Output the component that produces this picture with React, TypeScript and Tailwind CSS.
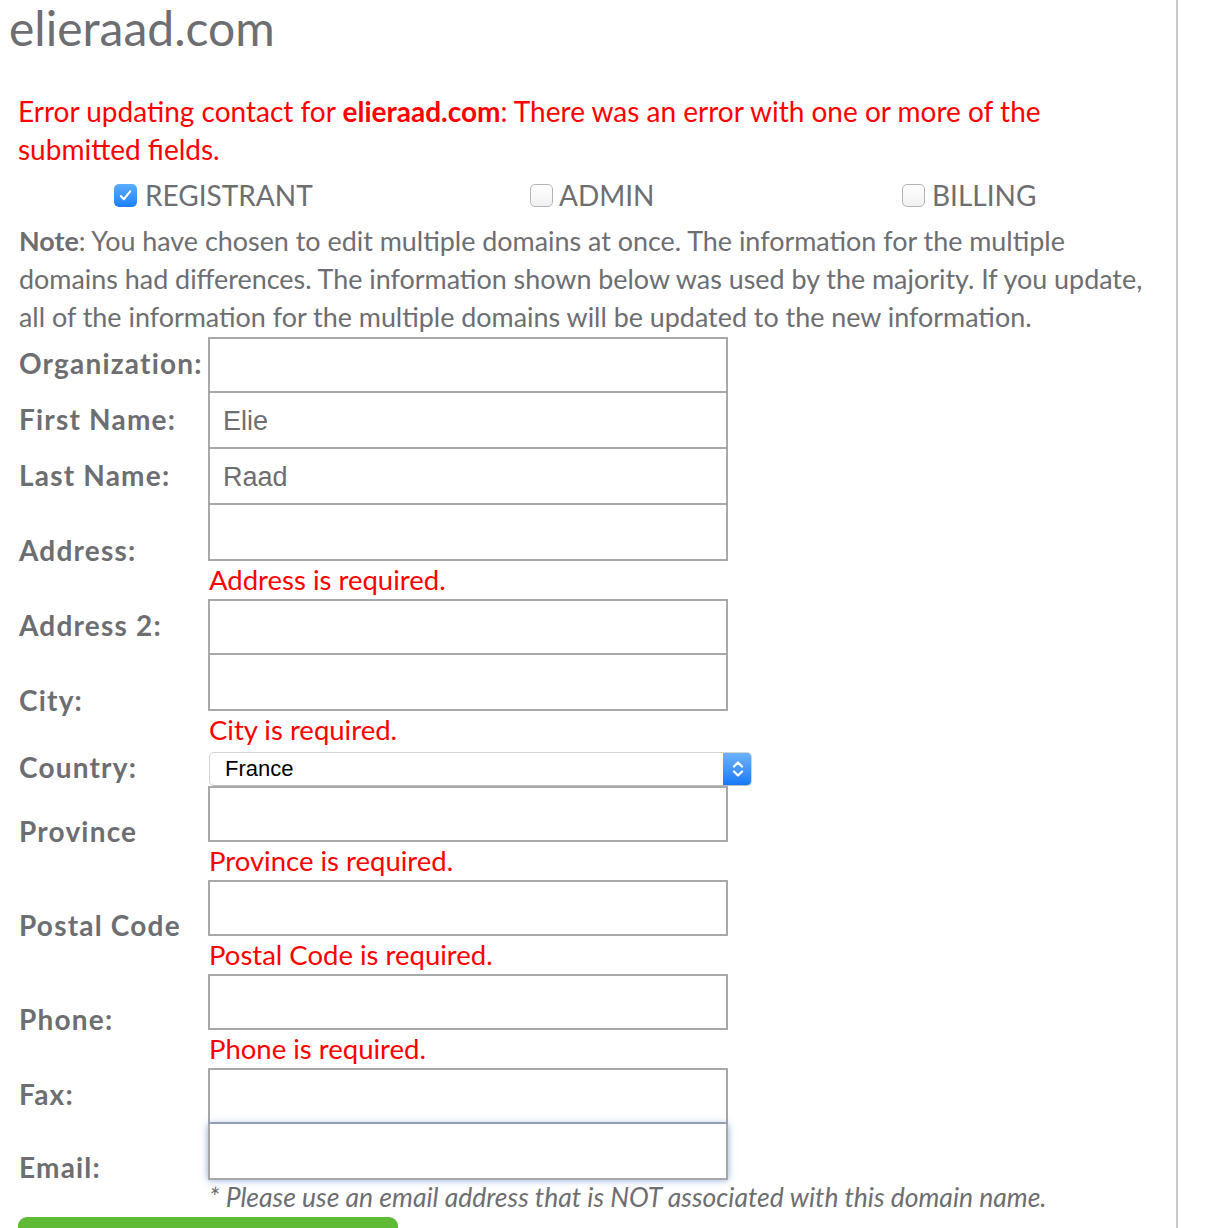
import React from 'react'

const gill = { fontFamily: 'Lato, "Open Sans", sans-serif' }

function Box({ checked }: { checked?: boolean }) {
  if (checked) {
    return (
      <span className="flex h-[23px] w-[23px] shrink-0 items-center justify-center rounded-[5px] bg-gradient-to-b from-[#5aaeff] to-[#1b7ff9]">
        <svg width="15" height="15" viewBox="0 0 16 16" fill="none">
          <path d="M3 8.5l3.2 3.5L13 3.5" stroke="#fff" strokeWidth="2.2" strokeLinecap="round" strokeLinejoin="round" />
        </svg>
      </span>
    )
  }
  return (
    <span className="h-[23px] w-[23px] shrink-0 rounded-[5px] border border-[#b4b4b4] bg-gradient-to-b from-white to-[#f1f1f1]" />
  )
}

function Field({
  label,
  value,
  error,
  joined,
  focus,
  note,
}: {
  label: string
  value?: string
  error?: string
  joined?: boolean
  focus?: boolean
  note?: string
}) {
  return (
    <div className="flex items-center">
      <div className="-mt-[5px] w-[189px] shrink-0 text-[28px] font-bold tracking-[1.2px] text-[#6d6e71]">{label}</div>
      <div className="flex flex-col">
        <div
          className={
            'flex h-[56px] w-[520px] items-center border-2 border-[#a8a8ab] bg-white px-[13px] pt-[3px] text-[27px] text-[#6d6e71] ' +
            (joined ? 'border-t-0 ' : '') +
            (focus ? 'border-[#a4acb8] shadow-[0_0_7px_rgba(90,130,200,0.7)]' : '')
          }
          style={{ fontFamily: '"Liberation Sans", Arial, sans-serif' }}
        >
          {value}
        </div>
        {error && <div className="h-[38px] pl-px text-[27.5px] leading-[38px] text-[#ff0000]">{error}</div>}
        {note && (
          <div className="h-[34px] whitespace-nowrap pl-px text-[26.5px] italic leading-[34px] text-[#6d6e71]">{note}</div>
        )}
      </div>
    </div>
  )
}

export default function App() {
  return (
    <div className="min-h-[1228px] w-full bg-white" style={gill}>
      <div className="h-[1228px] w-[1178px] overflow-hidden border-r-2 border-[#c9c9c9]">
        {/* Title */}
        <h1 className="pl-[9px] text-[48px] leading-[56px] text-[#6d6e71]">elieraad.com</h1>

        {/* Error */}
        <p className="mt-[36px] whitespace-nowrap pl-[18px] text-[28px] leading-[38px] text-[#ff0000]">
          Error updating contact for <b>elieraad.com</b>: There was an error with one or more of the
          <br />
          submitted fields.
        </p>

        {/* Contact types */}
        <div className="mt-[8px] flex h-[38px] items-center pl-[114px] text-[28px] text-[#6d6e71]">
          <div className="flex w-[416px] items-center gap-[8px]">
            <Box checked />
            <span>REGISTRANT</span>
          </div>
          <div className="flex w-[372px] items-center gap-[6px]">
            <Box />
            <span>ADMIN</span>
          </div>
          <div className="flex items-center gap-[7px]">
            <Box />
            <span>BILLING</span>
          </div>
        </div>

        {/* Note */}
        <p className="mt-[8px] whitespace-nowrap pl-[19px] text-[26.9px] leading-[38px] text-[#6d6e71]">
          <b>Note</b>: You have chosen to edit multiple domains at once. The information for the multiple
          <br />
          domains had differences. The information shown below was used by the majority. If you update,
          <br />
          all of the information for the multiple domains will be updated to the new information.
        </p>

        {/* Form */}
        <div className="mt-px flex flex-col pl-[19px]">
          <Field label="Organization:" />
          <Field label="First Name:" value="Elie" joined />
          <Field label="Last Name:" value="Raad" joined />
          <Field label="Address:" joined error="Address is required." />
          <Field label="Address 2:" />
          <Field label="City:" joined error="City is required." />

          <div className="flex h-[37px] items-center">
            <div className="-mt-[2px] w-[189px] shrink-0 text-[28px] font-bold tracking-[1.2px] text-[#6d6e71]">Country:</div>
            <div className="ml-px mt-[2px] flex h-[34px] w-[543px] items-stretch overflow-hidden rounded-[5px] border border-[#d4d4d4] border-b-[#bdbdbd] bg-white">
              <div
                className="flex flex-1 items-center pl-[15px] text-[22px] text-black"
                style={{ fontFamily: '"Liberation Sans", Arial, sans-serif' }}
              >
                France
              </div>
              <div className="-my-px -mr-px flex w-[29px] items-center justify-center rounded-r-[5px] bg-gradient-to-b from-[#6db4fc] to-[#0f77f7]">
                <svg width="14" height="22" viewBox="0 0 14 22" fill="none">
                  <path d="M3 8.5L7 4.5l4 4M3 13.5l4 4 4-4" stroke="#fff" strokeWidth="2.2" strokeLinecap="round" strokeLinejoin="round" />
                </svg>
              </div>
            </div>
          </div>

          <Field label="Province" error="Province is required." />
          <Field label="Postal Code" error="Postal Code is required." />
          <Field label="Phone:" error="Phone is required." />
          <Field label="Fax:" />
          <Field
            label="Email:"
            focus
            joined
            note="* Please use an email address that is NOT associated with this domain name."
          />
        </div>

        <div className="ml-[18px] mt-[3px] h-[40px] w-[380px] rounded-[9px] bg-[#5fba36]" />
      </div>
    </div>
  )
}
